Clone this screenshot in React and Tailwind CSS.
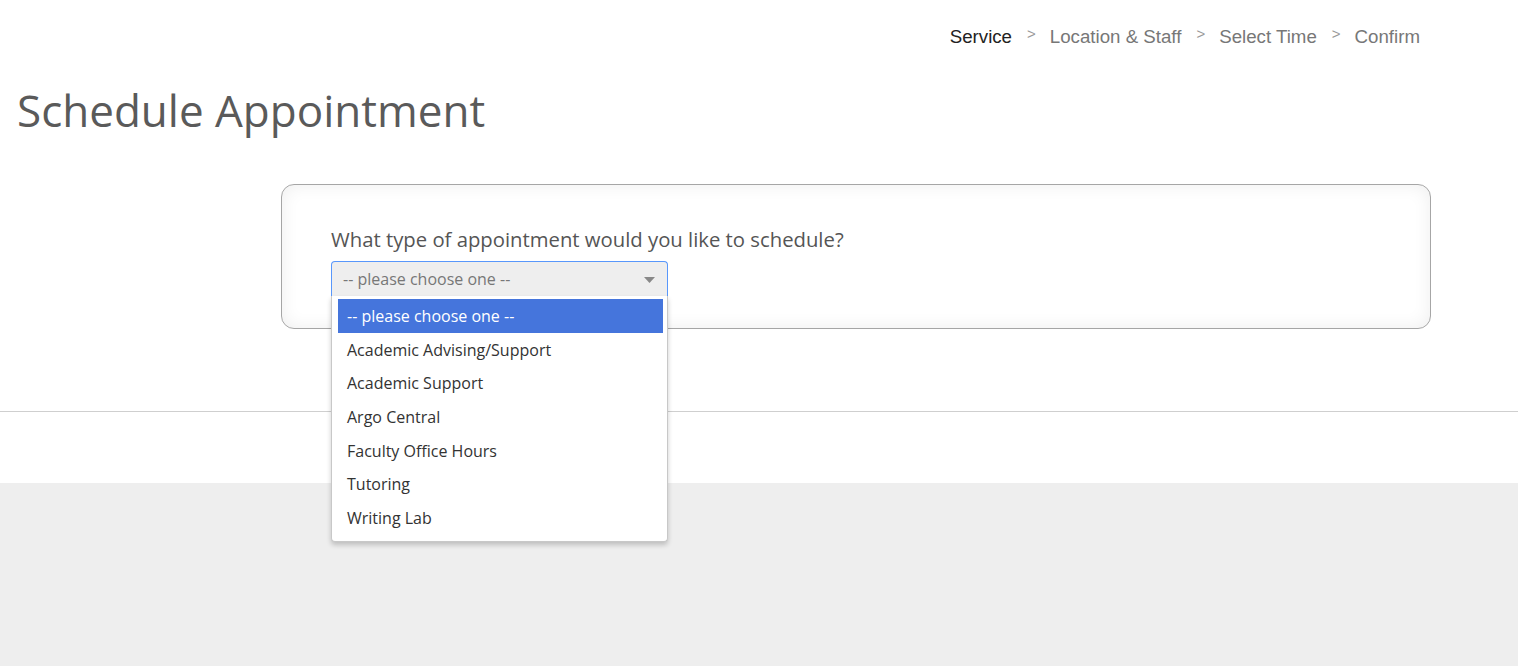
import React from "react";

const options = [
  "Academic Advising/Support",
  "Academic Support",
  "Argo Central",
  "Faculty Office Hours",
  "Tutoring",
  "Writing Lab",
];

export default function App() {
  return (
    <div className="min-h-[666px] bg-white flex flex-col">
      <div className="h-[483px] flex flex-col">
        <nav className="flex justify-end items-center pr-[98px] pt-[27px] h-[47px] font-['Liberation_Sans',Arial,sans-serif] text-[18.7px]">
          <span className="text-[#222]">Service</span>
          <span className="text-[#999] text-[15px] ml-[15px] mr-[14px] -translate-y-[3px]">&gt;</span>
          <span className="text-[#777]">Location &amp; Staff</span>
          <span className="text-[#999] text-[15px] ml-[15px] mr-[14px] -translate-y-[3px]">&gt;</span>
          <span className="text-[#777]">Select Time</span>
          <span className="text-[#999] text-[15px] ml-[15px] mr-[14px] -translate-y-[3px]">&gt;</span>
          <span className="text-[#777]">Confirm</span>
        </nav>
        <h1 className="pl-[17px] mt-[33px] text-[44px] leading-[60px] text-[#5a5a5a] font-['Open_Sans',sans-serif] font-normal">
          Schedule Appointment
        </h1>
        <div className="ml-[281px] mt-[44px] w-[1150px] h-[145px] rounded-[13px] border border-[#a6a6a6] shadow-[inset_0_0_18px_rgba(0,0,0,0.07)] pt-[40px] pl-[49px] font-['Open_Sans',sans-serif]">
          <div className="text-[20.3px] leading-[28px] text-[#555]">
            What type of appointment would you like to schedule?
          </div>
          <div className="relative mt-[8px] w-[337px]">
            <div className="h-[35px] bg-[#eeeeee] border border-[#5897fb] border-b-0 rounded-t-[4px] flex items-center justify-between pl-[11px] pr-[12px]">
              <span className="text-[16px] text-[#777]">-- please choose one --</span>
              <svg width="11" height="6" viewBox="0 0 11 6" className="mt-[1px]">
                <path d="M0 0 L11 0 L5.5 6 Z" fill="#888" />
              </svg>
            </div>
            <div className="absolute left-0 top-[35px] w-[337px] bg-white rounded-b-[4px] border border-[#c8c8c8] border-t-0 shadow-[0_3px_5px_rgba(0,0,0,0.2)] pt-[3px] pb-[6px] pl-[6px] pr-[4px] z-10">
              <div className="h-[34px] bg-[#4575dc] text-white text-[16px] flex items-center pl-[9px]">
                -- please choose one --
              </div>
              {options.map((o) => (
                <div key={o} className="h-[33.6px] text-[#333] text-[16px] flex items-center pl-[9px]">
                  {o}
                </div>
              ))}
            </div>
          </div>
        </div>
        <div className="mt-[82px] border-t border-[#cfcfcf]" />
      </div>
      <div className="flex-1 bg-[#eeeeee]" />
    </div>
  );
}
